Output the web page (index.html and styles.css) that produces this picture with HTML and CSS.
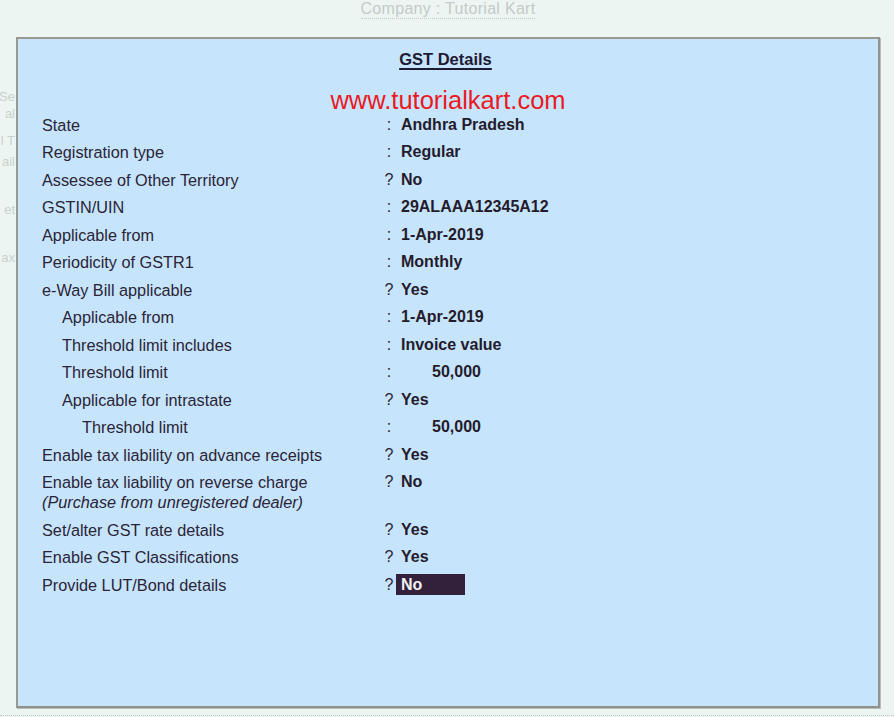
FILE: index.html
```html
<!DOCTYPE html>
<html lang="en">
<head>
<meta charset="utf-8">
<title>GST Details</title>
<link rel="stylesheet" href="styles.css">
</head>
<body>
<div class="screen">
  <div class="underlay">
    <span class="ghost g1">Se</span>
    <span class="ghost g2">al</span>
    <span class="ghost g3">l T</span>
    <span class="ghost g4">ail</span>
    <span class="ghost g5">et</span>
    <span class="ghost g6">ax</span>
  </div>
  <header class="topbar"><span class="company">Company : Tutorial Kart</span></header>
  <section class="panel">
    <h1 class="title">GST Details</h1>
    <div class="watermark">www.tutorialkart.com</div>
    <div class="rows">
      <div class="row"><span class="label">State</span><span class="sep">:</span><span class="val">Andhra Pradesh</span></div>
      <div class="row"><span class="label">Registration type</span><span class="sep">:</span><span class="val">Regular</span></div>
      <div class="row"><span class="label">Assessee of Other Territory</span><span class="sep">?</span><span class="val">No</span></div>
      <div class="row"><span class="label">GSTIN/UIN</span><span class="sep">:</span><span class="val">29ALAAA12345A12</span></div>
      <div class="row"><span class="label">Applicable from</span><span class="sep">:</span><span class="val">1-Apr-2019</span></div>
      <div class="row"><span class="label">Periodicity of GSTR1</span><span class="sep">:</span><span class="val">Monthly</span></div>
      <div class="row"><span class="label">e-Way Bill applicable</span><span class="sep">?</span><span class="val">Yes</span></div>
      <div class="row"><span class="label ind1">Applicable from</span><span class="sep">:</span><span class="val">1-Apr-2019</span></div>
      <div class="row"><span class="label ind1">Threshold limit includes</span><span class="sep">:</span><span class="val">Invoice value</span></div>
      <div class="row"><span class="label ind1">Threshold limit</span><span class="sep">:</span><span class="val amount">50,000</span></div>
      <div class="row"><span class="label ind1">Applicable for intrastate</span><span class="sep">?</span><span class="val">Yes</span></div>
      <div class="row"><span class="label ind2">Threshold limit</span><span class="sep">:</span><span class="val amount">50,000</span></div>
      <div class="row"><span class="label">Enable tax liability on advance receipts</span><span class="sep">?</span><span class="val">Yes</span></div>
      <div class="row"><span class="label">Enable tax liability on reverse charge<br><em class="note">(Purchase from unregistered dealer)</em></span><span class="sep">?</span><span class="val">No</span></div>
      <div class="row"><span class="label">Set/alter GST rate details</span><span class="sep">?</span><span class="val">Yes</span></div>
      <div class="row"><span class="label">Enable GST Classifications</span><span class="sep">?</span><span class="val">Yes</span></div>
      <div class="row"><span class="label">Provide LUT/Bond details</span><span class="sep">?</span><span class="val"><span class="cursor">No</span></span></div>
    </div>
  </section>
  <footer class="bottomline"></footer>
</div>
</body>
</html>
```

FILE: styles.css
```css
html, body {
  margin: 0;
  padding: 0;
}
body {
  background: #edf5f2;
  font-family: "Liberation Sans", Arial, sans-serif;
  color: #241d2f;
  width: 894px;
  height: 717px;
  overflow: hidden;
}
.screen {
  position: relative;
  width: 894px;
  height: 717px;
  display: flex;
  flex-direction: column;
}
.underlay {
  position: absolute;
  left: 0;
  top: 0;
  width: 16px;
  height: 300px;
  overflow: hidden;
}
.ghost {
  position: absolute;
  right: 1px;
  font-size: 13px;
  line-height: 14px;
  color: #c9d1cf;
  white-space: nowrap;
}
.g1 { top: 90px; }
.g2 { top: 107px; }
.g3 { top: 134px; }
.g4 { top: 155px; }
.g5 { top: 203px; }
.g6 { top: 251px; }
.topbar {
  height: 37px;
  display: flex;
  justify-content: center;
  align-items: flex-start;
}
.company {
  margin-top: -1px;
  margin-left: 2px;
  font-size: 16px;
  line-height: 19px;
  color: #c3cac8;
  border-bottom: 1px dotted #c3cac8;
  letter-spacing: 0.3px;
}
.panel {
  margin-left: 16px;
  height: 667px;
  background: #c7e4fd;
  border: 2px solid #9a9a92;
  border-right-color: #8f918c;
  border-bottom-color: #8f918c;
  padding: 0 0 0 24px;
  box-sizing: content-box;
  width: 836px;
  box-shadow: 1px 1px 0 #b8bdb9;
}
.title {
  margin: 10px 0 0 -29px;
  font-size: 16.5px;
  line-height: 20px;
  font-weight: bold;
  text-align: center;
  color: #1e1a33;
  text-decoration: underline;
  text-underline-offset: 3px;
  text-decoration-thickness: 2px;
}
.watermark {
  margin: 20px 0 0 -24px;
  height: 22px;
  line-height: 22px;
  text-align: center;
  font-size: 25.5px;
  color: #ea1a1f;
}
.rows {
  display: flex;
  flex-direction: column;
}
.row {
  display: grid;
  grid-template-columns: 340px 14px 1fr;
  padding: 3.75px 0;
  font-size: 16px;
  line-height: 20px;
}
.label {
  white-space: nowrap;
  color: #2a2436;
  font-size: 16.25px;
}
.ind1 { padding-left: 20px; }
.ind2 { padding-left: 40px; }
.note {
  font-style: italic;
}
.sep {
  text-align: center;
  color: #2a2436;
}
.val {
  padding-left: 5px;
  font-weight: bold;
  color: #241b2b;
}
.amount {
  width: 80px;
  text-align: right;
}
.cursor {
  display: inline-block;
  margin-left: -5px;
  margin-top: -1px;
  width: 64px;
  height: 21px;
  padding-left: 5px;
  line-height: 21px;
  background: #33203a;
  color: #f2f0f4;
  font-weight: bold;
}
.bottomline {
  margin-top: 7px;
  height: 1px;
  border-top: 1px dotted #c0c6c4;
}
```
